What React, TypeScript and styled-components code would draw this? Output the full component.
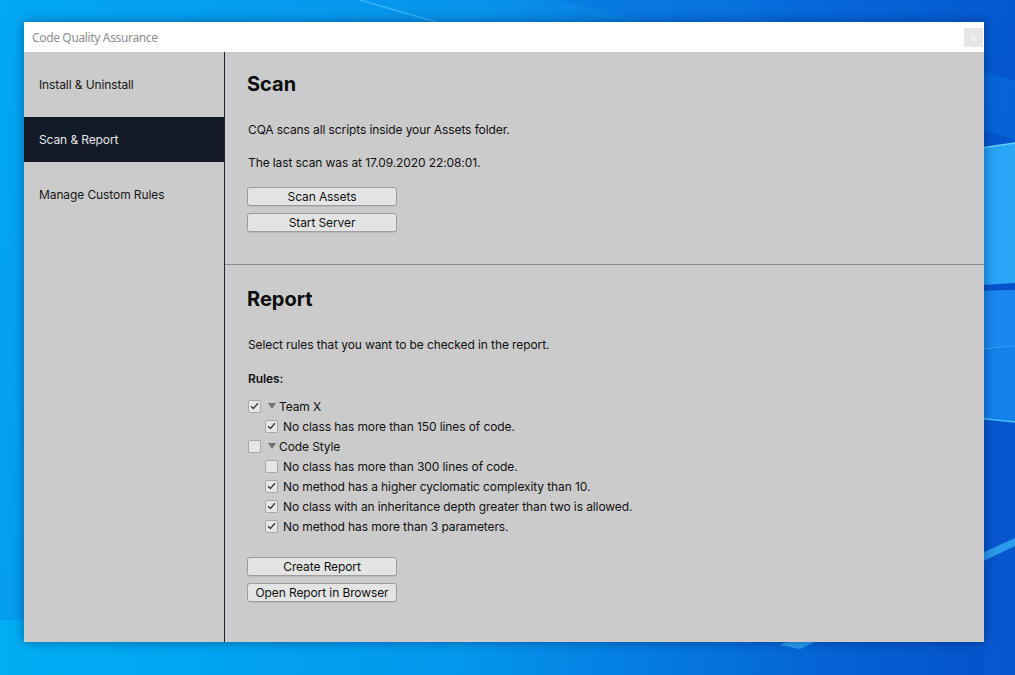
import React from "react";
import styled, { createGlobalStyle } from "styled-components";

const GlobalStyle = createGlobalStyle`
  html, body { margin: 0; padding: 0; }
  body {
    width: 1015px;
    height: 675px;
    overflow: hidden;
    font-family: Inter, "Noto Sans", sans-serif;
  }
  * { box-sizing: border-box; }
`;

const Desktop = styled.div`
  position: relative;
  width: 1015px;
  height: 675px;
  padding: 22px 31px 33px 24px;
  display: flex;
  overflow: hidden;
`;

const Wallpaper = styled.svg`
  position: absolute;
  inset: 0;
  width: 1015px;
  height: 675px;
  z-index: 0;
`;

const Window = styled.div`
  position: relative;
  z-index: 1;
  width: 960px;
  height: 620px;
  display: flex;
  flex-direction: column;
  background: #cbcbcb;
  box-shadow: 0 0 10px rgba(0, 20, 60, 0.45);
`;

const TitleBar = styled.div`
  height: 30px;
  flex: none;
  background: #ffffff;
  display: flex;
  align-items: center;
  justify-content: space-between;
  padding: 0 1px 0 8px;
`;

const TitleText = styled.span`
  font-family: "Noto Sans", "Open Sans", sans-serif;
  font-size: 12px;
  color: #8e8e8e;
  letter-spacing: -0.35px;
`;

const CloseButton = styled.div`
  width: 19px;
  height: 19px;
  background: #e6e6e6;
  color: #fafafa;
  font-family: "Liberation Sans", sans-serif;
  font-size: 11px;
  display: flex;
  align-items: center;
  justify-content: center;
`;

const Body = styled.div`
  flex: 1;
  display: flex;
  min-height: 0;
  letter-spacing: -0.1px;
`;

const Sidebar = styled.nav`
  width: 201px;
  flex: none;
  border-right: 1px solid #1b2230;
  display: flex;
  flex-direction: column;
  gap: 10px;
  padding-top: 10px;
`;

const NavItem = styled.div<{ $active?: boolean }>`
  height: 45px;
  display: flex;
  align-items: center;
  padding-left: 15px;
  font-size: 12px;
  color: ${(p) => (p.$active ? "#e8e8e8" : "#161616")};
  background: ${(p) => (p.$active ? "#111a26" : "transparent")};
`;

const Content = styled.main`
  flex: 1;
  display: flex;
  flex-direction: column;
`;

const Section = styled.section<{ $top: number; $bottom: number; $divider?: boolean }>`
  padding: ${(p) => p.$top}px 22px ${(p) => p.$bottom}px 22px;
  border-bottom: ${(p) => (p.$divider ? "1px solid #8a8a8a" : "none")};
  display: flex;
  flex-direction: column;
  align-items: flex-start;
`;

const Heading = styled.h2`
  margin: 0;
  font-size: 20px;
  line-height: 24px;
  font-weight: 700;
  color: #0d0d0d;
  letter-spacing: 0;
`;

const Paragraph = styled.p<{ $mt: number; $bold?: boolean }>`
  margin: ${(p) => p.$mt}px 0 0 1px;
  font-size: 12px;
  line-height: 16px;
  color: #111111;
  font-weight: ${(p) => (p.$bold ? 600 : 400)};
`;

const Button = styled.button<{ $mt: number }>`
  margin-top: ${(p) => p.$mt}px;
  width: 150px;
  height: 19px;
  padding: 0;
  border: 1px solid #9d9d9d;
  border-radius: 3px;
  background: #e4e4e4;
  font-family: Inter, "Noto Sans", sans-serif;
  font-size: 12px;
  letter-spacing: -0.1px;
  color: #111111;
  display: flex;
  align-items: center;
  justify-content: center;
  box-shadow: 0 1px 0 rgba(0,0,0,0.08);
`;

const RuleList = styled.div`
  margin-top: 9px;
  display: flex;
  flex-direction: column;
`;

const RuleRow = styled.div<{ $level: number }>`
  height: 20px;
  display: flex;
  align-items: center;
  padding-left: ${(p) => 1 + p.$level * 17}px;
  font-size: 12px;
  color: #111111;
`;

const Box = styled.span<{ $checked?: boolean }>`
  width: 13px;
  height: 13px;
  flex: none;
  border: 1px solid #a8a8a8;
  border-radius: 2px;
  background: #e6e6e6;
  display: flex;
  align-items: center;
  justify-content: center;
`;

const Arrow = styled.span`
  width: 0;
  height: 0;
  margin: 0 3px 0 7px;
  border-left: 4px solid transparent;
  border-right: 4px solid transparent;
  border-top: 6px solid #727272;
`;

const RuleLabel = styled.span<{ $gap: number }>`
  margin-left: ${(p) => p.$gap}px;
`;

const Check = () => (
  <svg width="9" height="8" viewBox="0 0 9 8">
    <path d="M1 4.2 L3.4 6.5 L8 1.3" fill="none" stroke="#3a3a3a" strokeWidth="1.3" />
  </svg>
);

type Rule = { level: number; checked: boolean; label: string; group?: boolean };

const rules: Rule[] = [
  { level: 0, checked: true, label: "Team X", group: true },
  { level: 1, checked: true, label: "No class has more than 150 lines of code." },
  { level: 0, checked: false, label: "Code Style", group: true },
  { level: 1, checked: false, label: "No class has more than 300 lines of code." },
  { level: 1, checked: true, label: "No method has a higher cyclomatic complexity than 10." },
  { level: 1, checked: true, label: "No class with an inheritance depth greater than two is allowed." },
  { level: 1, checked: true, label: "No method has more than 3 parameters." },
];

const WallpaperArt = () => (
  <Wallpaper viewBox="0 0 1015 675" preserveAspectRatio="none">
    <defs>
      <linearGradient id="base" x1="0" y1="0" x2="1" y2="0.25">
        <stop offset="0" stopColor="#02a8f4" />
        <stop offset="0.45" stopColor="#0892ea" />
        <stop offset="0.75" stopColor="#0668da" />
        <stop offset="1" stopColor="#0453cb" />
      </linearGradient>
      <linearGradient id="bottom" x1="0" y1="0" x2="1" y2="0">
        <stop offset="0" stopColor="#00aef4" stopOpacity="1" />
        <stop offset="0.45" stopColor="#0398ec" stopOpacity="1" />
        <stop offset="0.8" stopColor="#0570dc" stopOpacity="0.6" />
        <stop offset="1" stopColor="#0562d6" stopOpacity="0" />
      </linearGradient>
      <linearGradient id="beam" x1="1" y1="0" x2="0" y2="0">
        <stop offset="0" stopColor="#2aa8f6" />
        <stop offset="1" stopColor="#1a8cf0" />
      </linearGradient>
    </defs>
    <rect x="0" y="0" width="1015" height="675" fill="url(#base)" />
    <rect x="984" y="422" width="31" height="253" fill="#0a58d0" opacity="0.6" />
    <rect x="0" y="620" width="1015" height="55" fill="url(#bottom)" />
    <polygon points="560,0 700,0 1015,80 1015,140 660,25" fill="#0a6fe0" opacity="0.5" />
    <line x1="360" y1="0" x2="450" y2="26" stroke="#55c4ff" strokeWidth="1.5" opacity="0.6" />
    <polygon points="900,160 1015,143 1015,283 900,290" fill="url(#beam)" />
    <line x1="900" y1="160" x2="1015" y2="143" stroke="#5fd2ff" strokeWidth="1.5" />
    <polygon points="900,292 1015,290 1015,348 900,358" fill="#1a86ee" />
    <line x1="900" y1="358" x2="1015" y2="346" stroke="#3fb4fb" strokeWidth="1" />
    <polygon points="900,358 1015,346 1015,422 900,410" fill="#1480ea" />
    <line x1="900" y1="410" x2="1015" y2="422" stroke="#46c2ff" strokeWidth="1.5" />
    <polygon points="780,645 1015,538 1015,546 800,649" fill="#38b8fa" opacity="0.7" />
  </Wallpaper>
);

export default function App() {
  return (
    <>
      <GlobalStyle />
      <Desktop>
        <WallpaperArt />
        <Window>
          <TitleBar>
            <TitleText>Code Quality Assurance</TitleText>
            <CloseButton>x</CloseButton>
          </TitleBar>
          <Body>
            <Sidebar>
              <NavItem>Install &amp; Uninstall</NavItem>
              <NavItem $active>Scan &amp; Report</NavItem>
              <NavItem>Manage Custom Rules</NavItem>
            </Sidebar>
            <Content>
              <Section $top={20} $bottom={32} $divider>
                <Heading>Scan</Heading>
                <Paragraph $mt={26}>CQA scans all scripts inside your Assets folder.</Paragraph>
                <Paragraph $mt={17}>The last scan was at 17.09.2020 22:08:01.</Paragraph>
                <Button $mt={16}>Scan Assets</Button>
                <Button $mt={7}>Start Server</Button>
              </Section>
              <Section $top={22} $bottom={0}>
                <Heading>Report</Heading>
                <Paragraph $mt={26}>Select rules that you want to be checked in the report.</Paragraph>
                <Paragraph $mt={18} $bold>Rules:</Paragraph>
                <RuleList>
                  {rules.map((r, i) => (
                    <RuleRow key={i} $level={r.level}>
                      <Box $checked={r.checked}>{r.checked && <Check />}</Box>
                      {r.group && <Arrow />}
                      <RuleLabel $gap={r.group ? 0 : 5}>{r.label}</RuleLabel>
                    </RuleRow>
                  ))}
                </RuleList>
                <Button $mt={21}>Create Report</Button>
                <Button $mt={7}>Open Report in Browser</Button>
              </Section>
            </Content>
          </Body>
        </Window>
      </Desktop>
    </>
  );
}
